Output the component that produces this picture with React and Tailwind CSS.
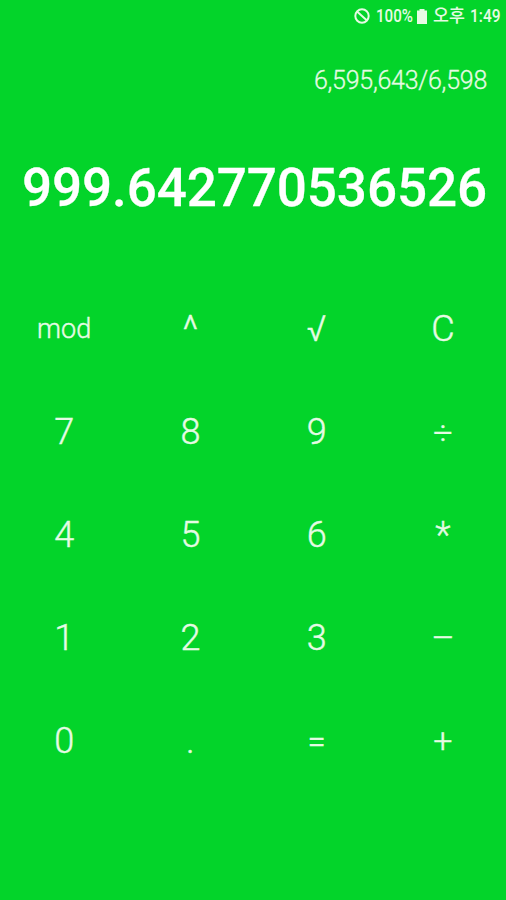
const KEYS = [
  { label: "mod", style: "pt-px text-[27px]" },
  { label: "^", style: "pt-1 text-[38px]" },
  { label: "√", style: "text-[36px]" },
  { label: "C", style: "text-[36px]" },
  { label: "7", style: "text-[36px]" },
  { label: "8", style: "text-[36px]" },
  { label: "9", style: "text-[36px]" },
  { label: "÷", style: "pt-0.5 text-[34px]" },
  { label: "4", style: "text-[36px]" },
  { label: "5", style: "text-[36px]" },
  { label: "6", style: "text-[36px]" },
  { label: "*", style: "text-[36px]" },
  { label: "1", style: "text-[36px]" },
  { label: "2", style: "text-[36px]" },
  { label: "3", style: "text-[36px]" },
  { label: "–", style: "text-[36px]" },
  { label: "0", style: "text-[36px]" },
  { label: ".", style: "text-[36px]" },
  { label: "=", style: "text-[32px] [-webkit-text-stroke:0.7px]" },
  { label: "+", style: "text-[34px]" },
];

function StatusBar() {
  return (
    <div className="flex h-8 items-center justify-end pr-[5px] text-lg whitespace-nowrap text-[#e6fbe4] font-['Roboto','Noto_Sans_CJK_KR',sans-serif]">
      <svg className="mr-[6px] size-4" viewBox="0 0 16 16" fill="none" stroke="currentColor" strokeWidth="2">
        <circle cx="8" cy="8" r="6.7" />
        <path d="M3.3 3.8l9.4 8.4" />
      </svg>
      <span className="w-[37px] origin-left scale-x-[0.84] font-medium">100%</span>
      <svg className="mr-[6px] ml-[4px] h-[15px] w-[10px]" viewBox="0 0 10 15" fill="currentColor">
        <path d="M2.5 0h5v1.5H10V15H0V1.5h2.5z" />
      </svg>
      <span className="mr-[5px] w-[32px] origin-left scale-x-[0.96] font-medium">오후</span>
      <span className="w-[31px] origin-left scale-x-[0.86] font-medium">1:49</span>
    </div>
  );
}

export default function App() {
  return (
    <div className="h-[900px] w-[506px] overflow-hidden bg-[#03d42a] font-['Roboto',sans-serif] text-white">
      <StatusBar />
      <div className="flex h-24 items-center justify-end pt-px pr-[19px] text-[25px] font-light tracking-[-0.25px] text-[#e6fbe4] [-webkit-text-stroke:0.3px]">
        6,595,643/6,598
      </div>
      <div className="flex h-[120px] items-center justify-end pt-px pr-[19px] text-[53px] font-medium tracking-[-0.1px] [-webkit-text-stroke:0.3px]">
        999.642770536526
      </div>
      <div className="mt-[29px] grid grid-cols-4 pl-px font-light text-[#e6fbe4] [-webkit-text-stroke:0.4px]">
        {KEYS.map((key) => (
          <button key={key.label} className={`h-[103px] ${key.style}`}>
            {key.label}
          </button>
        ))}
      </div>
    </div>
  );
}
